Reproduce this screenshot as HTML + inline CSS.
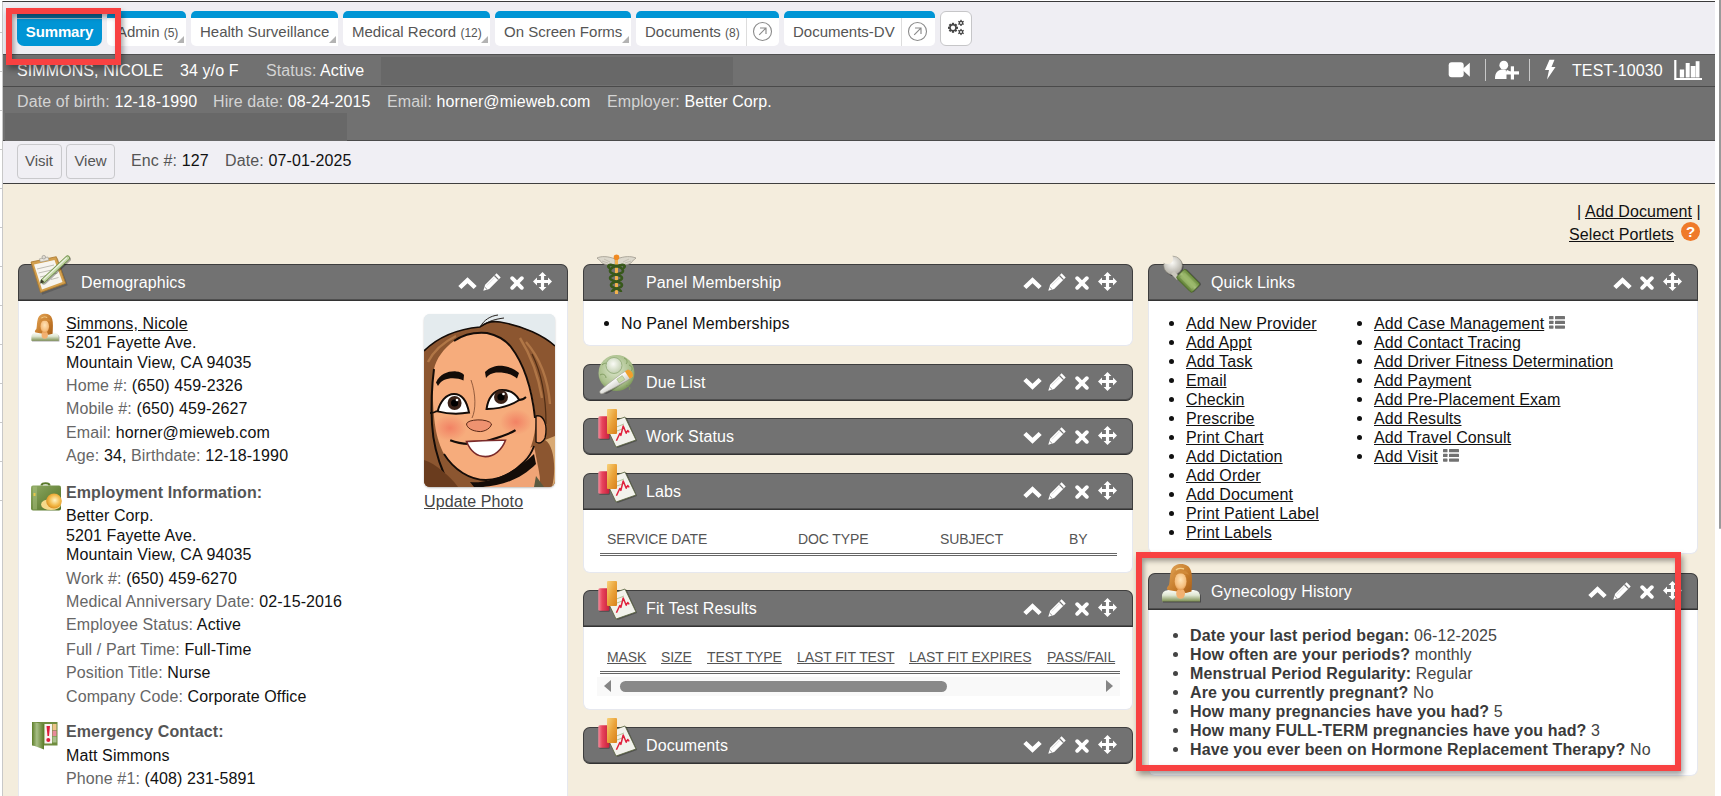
<!DOCTYPE html>
<html><head><meta charset="utf-8">
<style>
*{box-sizing:border-box;margin:0;padding:0}
html,body{width:1721px;height:796px;overflow:hidden;background:#fff;font-family:"Liberation Sans",sans-serif;position:relative}
.abs{position:absolute}
#frame{position:absolute;left:2px;top:1px;width:1713px;height:795px;border-left:1px solid #c8c8c8;border-top:1px solid #3a3a3a;background:#f4eddd}
#tabbar{position:absolute;left:3px;top:2px;width:1712px;height:52px;background:#efeef3}
.tab{position:absolute;top:11px;height:35px;background:#fff;border-top:7px solid #0095d5;border-radius:5px 5px 0 5px;font-size:15px;color:#555;white-space:nowrap;line-height:28px}
.tab small{font-size:12px}
.tab .tri{position:absolute;right:2px;bottom:3px;width:0;height:0;border-left:7px solid transparent;border-bottom:7px solid #b3b3b3}
#hdr1{position:absolute;left:3px;top:54px;width:1712px;height:33px;background:#717171;border-top:1px solid #505050;border-bottom:1px solid #4a4a4a}
#hdr2{position:absolute;left:3px;top:87px;width:1712px;height:54px;background:#717171;border-bottom:1px solid #4a4a4a}
.hl{color:#d4d4d4}.hv{color:#fff}
.htxt{position:absolute;font-size:16px;white-space:nowrap;line-height:18px;letter-spacing:.09px}
#enc{position:absolute;left:3px;top:141px;width:1712px;height:43px;background:#f0eff4;border-bottom:1px solid #3f3f3f}
.btn{position:absolute;top:3px;height:35px;border:1px solid #c9c9cc;border-radius:4px;background:#f0eff4;font-size:15px;color:#555;line-height:31px;text-align:center}
.etxt{position:absolute;top:11px;font-size:16px;white-space:nowrap;color:#555;line-height:18px;letter-spacing:.12px}
.etxt b{font-weight:normal;color:#111}
a{color:#111;text-decoration:underline}
.ph{position:absolute;height:37px;background:#727272;border:1px solid #3e3e3e;border-bottom-color:#333;box-shadow:inset 0 -1px 0 rgba(0,0,0,.3);border-radius:7px 7px 0 0}
.ph.col{border-radius:7px}
.ph .t{position:absolute;left:62px;top:9px;font-size:16px;color:#fff;line-height:18px;white-space:nowrap;letter-spacing:.12px}
.pb{position:absolute;background:#fff;border-radius:0 0 7px 7px;border:1px solid #e6e8ef;border-top:none}
.ico{position:absolute;top:0}
</style></head><body>
<div id="frame"></div>
<svg width="0" height="0" style="position:absolute">
<defs>
 <symbol id="i-up" viewBox="0 0 19 12"><path d="M0.3 9 L9.5 0.2 L18.7 9 L15.6 12 L9.5 6.2 L3.4 12 Z" fill="#fff"/></symbol>
 <symbol id="i-down" viewBox="0 0 19 12"><path d="M0.3 3 L9.5 11.8 L18.7 3 L15.6 0 L9.5 5.8 L3.4 0 Z" fill="#fff"/></symbol>
 <symbol id="i-pen" viewBox="0 0 18 18"><path d="M13.6 0.3 L17.7 4.4 L6.2 15.9 L0.3 17.7 L2.1 11.8 Z" fill="#fff"/><path d="M11.4 2.5 L15.5 6.6" stroke="#727272" stroke-width="1.2"/><path d="M3.8 12.4 L11.6 4.6" stroke="#c8c8c8" stroke-width="0.6"/><path d="M1.6 14 L4 16.4" stroke="#727272" stroke-width="0.8"/></symbol>
 <symbol id="i-x" viewBox="0 0 14 14"><path d="M2.2 2.2 L11.8 11.8 M11.8 2.2 L2.2 11.8" stroke="#fff" stroke-width="3.8" stroke-linecap="round"/></symbol>
 <symbol id="i-move" viewBox="0 0 19 19"><path d="M9.5 0 L13.4 4 L11.1 4 L11.1 7.9 L15 7.9 L15 5.6 L19 9.5 L15 13.4 L15 11.1 L11.1 11.1 L11.1 15 L13.4 15 L9.5 19 L5.6 15 L7.9 15 L7.9 11.1 L4 11.1 L4 13.4 L0 9.5 L4 5.6 L4 7.9 L7.9 7.9 L7.9 4 L5.6 4 Z" fill="#fff"/></symbol>
 <symbol id="i-chart" viewBox="0 0 40 40">
  <defs><linearGradient id="gred" x1="0" y1="0" x2="1" y2="0"><stop offset="0" stop-color="#f58a9a"/><stop offset=".35" stop-color="#e8455c"/><stop offset="1" stop-color="#c81e3c"/></linearGradient>
  <linearGradient id="gor" x1="0" y1="0" x2="1" y2="1"><stop offset="0" stop-color="#f8d27a"/><stop offset=".5" stop-color="#eaa33a"/><stop offset="1" stop-color="#d8801a"/></linearGradient></defs>
  <polygon points="9,17 29.5,9.5 40,33 20.5,40" fill="#000" opacity=".3"/>
  <polygon points="8,16 28,9 39,32 19,39" fill="#f2f2ec" stroke="#55603a" stroke-width=".8"/>
  <path d="M17 20 L27 16 M18.5 23.5 L28 20" stroke="#9ab07a" stroke-width=".7"/>
  <path d="M19.4 32.7 L22.8 25.5 L23.9 27.4 L26.2 18 L29.2 25.2 L30.7 22.5 L32.2 24.4" fill="none" stroke="#e0203c" stroke-width="1.5" stroke-linejoin="round"/>
  <rect x="2" y="10" width="11" height="22" rx="1.5" fill="#000" opacity=".25"/>
  <rect x="1.3" y="8.2" width="11" height="22.6" rx="1.5" fill="url(#gred)"/>
  <rect x="10" y="1" width="10" height="25" rx="1" fill="url(#gor)"/>
 </symbol>
 <symbol id="i-woman" viewBox="0 0 42 42">
  <defs><linearGradient id="gwb" x1="0" y1="0" x2="0" y2="1"><stop offset="0" stop-color="#fbfcf8"/><stop offset=".45" stop-color="#dfe6d2"/><stop offset="1" stop-color="#7d9052"/></linearGradient>
  <radialGradient id="gwf" cx=".5" cy=".4" r=".65"><stop offset="0" stop-color="#ffe4b8"/><stop offset=".7" stop-color="#f5bd7c"/><stop offset="1" stop-color="#dc8c40"/></radialGradient>
  <linearGradient id="gwh" x1="0" y1="0" x2="1" y2="1"><stop offset="0" stop-color="#e6a85a"/><stop offset=".6" stop-color="#c47a2a"/><stop offset="1" stop-color="#a85e18"/></linearGradient></defs>
  <path d="M3 40.5 L3 35 C3 31 6 29.5 11 29.5 L33 29.5 C38 29.5 41 31 41 35 L41 40.5 Z" fill="#000" opacity=".35"/>
  <path d="M2 39.5 L2 34 C2 30 5 28 10 28 L32 28 C37 28 40 30 40 34 L40 39.5 Z" fill="url(#gwb)"/>
  <path d="M8 28 C6 27 7 25 9 23 C10 19 9.5 14 11 9 C13 3.5 17 2 21 2 C26 2 29.5 4 31 9 C32.5 14 32 22 31.5 29.5 L26 31 L14 29 Z" fill="url(#gwh)"/>
  <ellipse cx="20.6" cy="31.5" rx="4.4" ry="5.2" fill="#f2b070"/>
  <ellipse cx="20.6" cy="19.5" rx="6" ry="8.8" fill="url(#gwf)"/>
  <path d="M13 13 C14 9 18 8 21 9 C24 8 28 9 29 13 C26 11 16 11 13 13 Z" fill="#d08a3a"/>
  <path d="M16 8 C18 6 22 6 24 7" stroke="#f4d08a" stroke-width="1.4" fill="none"/>
 </symbol>
</defs></svg>

<div id="tabbar"></div>

<!-- tabs -->
<div class="abs" style="left:17px;top:14px;width:85px;height:32px;background:#0095d5;border-top:4px solid #0a6a98;box-shadow:inset 0 1px 0 #9fb3bf;border-radius:0 0 7px 7px;color:#fff;font-weight:bold;font-size:15px;text-align:center;line-height:27px;letter-spacing:-.15px">Summary</div>
<div class="tab" style="left:107px;width:79px;padding-left:10px">Admin <small>(5)</small><span class="tri"></span></div>
<div class="tab" style="left:191px;width:147px;padding-left:9px">Health Surveillance<span class="tri"></span></div>
<div class="tab" style="left:343px;width:147px;padding-left:9px">Medical Record <small>(12)</small><span class="tri"></span></div>
<div class="tab" style="left:495px;width:136px;padding-left:9px">On Screen Forms<span class="tri"></span></div>
<div class="tab" style="left:636px;width:143px;padding-left:9px;border-radius:5px">Documents <small>(8)</small></div>
<div class="tab" style="left:784px;width:151px;padding-left:9px;border-radius:5px">Documents-DV</div>

<!-- header -->
<div id="hdr1"></div>
<div id="hdr2"></div>
<div class="abs" style="left:381px;top:57px;width:352px;height:28px;background:#686868"></div>
<div class="abs" style="left:5px;top:113px;width:342px;height:28px;background:#686868"></div>
<div class="htxt hv" style="left:17px;top:62px">SIMMONS, NICOLE</div>
<div class="htxt hv" style="left:180px;top:62px">34 y/o F</div>
<div class="htxt" style="left:266px;top:62px"><span class="hl">Status:</span> <span class="hv">Active</span></div>
<div class="htxt" style="left:17px;top:93px"><span class="hl">Date of birth:</span> <span class="hv">12-18-1990</span></div>
<div class="htxt" style="left:213px;top:93px"><span class="hl">Hire date:</span> <span class="hv">08-24-2015</span></div>
<div class="htxt" style="left:387px;top:93px"><span class="hl">Email:</span> <span class="hv">horner@mieweb.com</span></div>
<div class="htxt" style="left:607px;top:93px"><span class="hl">Employer:</span> <span class="hv">Better Corp.</span></div>
<div class="htxt hv" style="left:1572px;top:62px">TEST-10030</div>

<!-- encounter bar -->
<div id="enc">
 <div class="btn" style="left:14px;width:45px;text-indent:-1px">Visit</div>
 <div class="btn" style="left:63px;width:49px">View</div>
 <div class="etxt" style="left:128px">Enc #: <b>127</b></div>
 <div class="etxt" style="left:222px">Date: <b>07-01-2025</b></div>
</div>

<!-- add doc links -->
<div class="abs" style="left:1577px;top:203px;font-size:16px;color:#111;white-space:nowrap;line-height:18px;letter-spacing:.1px">| <a>Add Document</a> |</div>
<div class="abs" style="left:1569px;top:226px;font-size:16px;white-space:nowrap;line-height:18px;letter-spacing:.12px"><a>Select Portlets</a></div>
<div class="abs" style="left:1681px;top:222px;width:19px;height:19px;border-radius:50%;background:#ef7a2a;color:#fff;font-weight:bold;font-size:15px;text-align:center;line-height:19px">?</div>

<!-- Column 1: Demographics -->
<div class="ph" style="left:18px;top:264px;width:550px"><div class="t">Demographics</div></div><svg class="abs" style="left:29px;top:254px" width="42" height="42" viewBox="0 0 42 42">
<defs><linearGradient id="gpen" x1="0" y1="0" x2="1" y2="1"><stop offset="0" stop-color="#dfe8cf"/><stop offset="1" stop-color="#7d9a58"/></linearGradient></defs>
<polygon points="2.5,9 27.5,3 37.5,30 12,39.5" fill="#3b3b3b" opacity=".35" transform="translate(1.2,1.2)"/>
<polygon points="2,8 27.3,2.7 36.7,29.4 11.5,38.5" fill="#d3a04e" stroke="#a8762b" stroke-width=".8"/>
<polygon points="5,10.5 25.5,6 33.5,28 13,35.5" fill="#f7f5ef"/>
<path d="M8 15 L25 11 M9.5 19 L27 15 M11 23 L28.5 19 M13 27.5 L19 26 M22 25.5 L29.5 23.5" stroke="#b9b7ae" stroke-width=".9"/>
<path d="M10.5 4.8 L19 3 L19.8 6.2 L11.3 8 Z" fill="#e7e4dc" stroke="#9c9a92" stroke-width=".6"/><circle cx="14.8" cy="3.2" r="1.8" fill="#dedbd3" stroke="#8f8c84" stroke-width=".6"/>
<path d="M14 27 L38.5 4" stroke="#000" stroke-opacity=".3" stroke-width="5" stroke-linecap="round" transform="translate(1 1.2)"/><path d="M14 27 L38.5 4" stroke="#6f8f48" stroke-width="5" stroke-linecap="round"/><path d="M14 27 L38.5 4" stroke="#c3d6a6" stroke-width="3.4" stroke-linecap="round"/><path d="M15 25.2 L37.5 4" stroke="#eef4e4" stroke-width="1.1" stroke-linecap="round"/>
<path d="M11 29.5 L12.3 25.2 L15.6 28.2 Z" fill="#3a3a2a"/>
</svg><svg class="abs" style="left:533.0px;top:272px" width="19" height="19"><use href="#i-move"/></svg><svg class="abs" style="left:510.0px;top:276px" width="14" height="14"><use href="#i-x"/></svg><svg class="abs" style="left:483.0px;top:273px" width="18" height="18"><use href="#i-pen"/></svg><svg class="abs" style="left:457.5px;top:277px" width="19" height="12"><use href="#i-up"/></svg><div class="pb" style="left:18px;top:301px;width:550px;height:500px;border-radius:0"></div>
<!-- Column 2 -->
<div class="ph" style="left:583px;top:264px;width:550px"><div class="t">Panel Membership</div></div><div class="pb" style="left:583px;top:301px;width:550px;height:45px"></div><svg class="abs" style="left:596px;top:253px" width="42" height="43" viewBox="0 0 42 43">
<path d="M19 6 C12 3 5 3 1 5 C3 7 5 8 6 10 C9 12 14 12 19 12 Z" fill="#dcd8cc" stroke="#a09b8e" stroke-width=".8"/>
<path d="M21 6 C28 3 35 3 40 5 C38 7 36 8 35 10 C32 12 27 12 21 12 Z" fill="#dcd8cc" stroke="#a09b8e" stroke-width=".8"/>
<path d="M6 8 L12 10 M8 6 L14 9 M35 8 L29 10 M33 6 L27 9" stroke="#bdb8aa" stroke-width=".8"/>
<rect x="19" y="4" width="3" height="37" fill="#f2b24e"/>
<circle cx="20.5" cy="4.3" r="2.8" fill="#f08a22"/>
<path d="M14 15 C11 14 12 11 16 12 C22 13 27 15 27 18 C27 22 14 21 14 25 C14 29 26 28 26 32 C26 36 16 35 16 39 M27 15 C30 14 29 11 25 12 C19 13 14 15 14 18 C14 22 26 21 26 25 C26 29 15 28 15 32 C15 36 25 35 25 39" fill="none" stroke="#37581a" stroke-width="2.6"/>
</svg><svg class="abs" style="left:1098.0px;top:272px" width="19" height="19"><use href="#i-move"/></svg><svg class="abs" style="left:1075.0px;top:276px" width="14" height="14"><use href="#i-x"/></svg><svg class="abs" style="left:1048.0px;top:273px" width="18" height="18"><use href="#i-pen"/></svg><svg class="abs" style="left:1022.5px;top:277px" width="19" height="12"><use href="#i-up"/></svg><div class="ph col" style="left:583px;top:364px;width:550px"><div class="t">Due List</div></div><svg class="abs" style="left:596px;top:353px" width="42" height="42" viewBox="0 0 42 42">
<defs><radialGradient id="gdue" cx=".45" cy=".4" r=".65"><stop offset="0" stop-color="#dfe8d0"/><stop offset=".7" stop-color="#a9bf8a"/><stop offset="1" stop-color="#6f8c4c"/></radialGradient>
<radialGradient id="gdue2" cx=".45" cy=".4" r=".6"><stop offset="0" stop-color="#fafbf6"/><stop offset="1" stop-color="#c2cfb0"/></radialGradient>
<linearGradient id="gth" x1="0" y1="0" x2="0" y2="1"><stop offset="0" stop-color="#ffffff"/><stop offset="1" stop-color="#cfcfc8"/></linearGradient></defs>
<circle cx="20.5" cy="20" r="18" fill="url(#gdue)"/>
<path d="M6 12 C9 9 12 10 13 13 M4 22 C7 20 10 22 10 25 M28 5 C31 6 32 9 30 11 M33 12 C36 13 37 16 35 18 M30 33 C33 32 35 35 33 37 M12 33 C15 31 18 33 17 36" stroke="#7e9a5e" stroke-width=".9" fill="none"/>
<circle cx="18" cy="12.5" r="8" fill="url(#gdue2)" stroke="#8ea874" stroke-width=".8"/>
<g transform="rotate(-33 22 28)">
<rect x="3" y="24.5" width="34" height="7.5" rx="3.7" fill="#000" opacity=".25" transform="translate(.8 1)"/>
<path d="M0.5 28.2 C0.5 26.8 2 26 4 26 L12 25 L29 23.8 L35 23.8 C37 23.8 38 25.5 38 28.2 C38 31 37 32.6 35 32.6 L29 32.6 L12 31.4 L4 30.4 C2 30.4 0.5 29.6 .5 28.2 Z" fill="url(#gth)" stroke="#a8a69c" stroke-width=".6"/>
<path d="M33 23.8 L35.5 23.8 C37.5 23.8 38.5 25.5 38.5 28.2 C38.5 31 37.5 32.6 35.5 32.6 L33 32.6 Z" fill="#f0a02c"/>
<rect x="22" y="25.8" width="6.5" height="4.6" fill="#c9d9a8" stroke="#9ab07a" stroke-width=".5"/>
</g>
</svg><svg class="abs" style="left:1098.0px;top:372px" width="19" height="19"><use href="#i-move"/></svg><svg class="abs" style="left:1075.0px;top:376px" width="14" height="14"><use href="#i-x"/></svg><svg class="abs" style="left:1048.0px;top:373px" width="18" height="18"><use href="#i-pen"/></svg><svg class="abs" style="left:1022.5px;top:378px" width="19" height="12"><use href="#i-down"/></svg><div class="ph col" style="left:583px;top:418px;width:550px"><div class="t">Work Status</div></div><svg class="abs" style="left:597px;top:408px" width="40" height="40"><use href="#i-chart"/></svg><svg class="abs" style="left:1098.0px;top:426px" width="19" height="19"><use href="#i-move"/></svg><svg class="abs" style="left:1075.0px;top:430px" width="14" height="14"><use href="#i-x"/></svg><svg class="abs" style="left:1048.0px;top:427px" width="18" height="18"><use href="#i-pen"/></svg><svg class="abs" style="left:1022.5px;top:432px" width="19" height="12"><use href="#i-down"/></svg><div class="ph" style="left:583px;top:473px;width:550px"><div class="t">Labs</div></div><div class="pb" style="left:583px;top:510px;width:550px;height:63px"></div><svg class="abs" style="left:597px;top:463px" width="40" height="40"><use href="#i-chart"/></svg><svg class="abs" style="left:1098.0px;top:481px" width="19" height="19"><use href="#i-move"/></svg><svg class="abs" style="left:1075.0px;top:485px" width="14" height="14"><use href="#i-x"/></svg><svg class="abs" style="left:1048.0px;top:482px" width="18" height="18"><use href="#i-pen"/></svg><svg class="abs" style="left:1022.5px;top:486px" width="19" height="12"><use href="#i-up"/></svg><div class="ph" style="left:583px;top:590px;width:550px"><div class="t">Fit Test Results</div></div><div class="pb" style="left:583px;top:627px;width:550px;height:83px"></div><svg class="abs" style="left:597px;top:580px" width="40" height="40"><use href="#i-chart"/></svg><svg class="abs" style="left:1098.0px;top:598px" width="19" height="19"><use href="#i-move"/></svg><svg class="abs" style="left:1075.0px;top:602px" width="14" height="14"><use href="#i-x"/></svg><svg class="abs" style="left:1048.0px;top:599px" width="18" height="18"><use href="#i-pen"/></svg><svg class="abs" style="left:1022.5px;top:603px" width="19" height="12"><use href="#i-up"/></svg><div class="ph col" style="left:583px;top:727px;width:550px"><div class="t">Documents</div></div><svg class="abs" style="left:597px;top:717px" width="40" height="40"><use href="#i-chart"/></svg><svg class="abs" style="left:1098.0px;top:735px" width="19" height="19"><use href="#i-move"/></svg><svg class="abs" style="left:1075.0px;top:739px" width="14" height="14"><use href="#i-x"/></svg><svg class="abs" style="left:1048.0px;top:736px" width="18" height="18"><use href="#i-pen"/></svg><svg class="abs" style="left:1022.5px;top:741px" width="19" height="12"><use href="#i-down"/></svg>
<!-- Column 3 -->
<div class="ph" style="left:1148px;top:264px;width:550px"><div class="t">Quick Links</div></div><div class="pb" style="left:1148px;top:301px;width:550px;height:253px"></div><svg class="abs" style="left:1158px;top:253px" width="44" height="43" viewBox="0 0 44 43">
<defs><linearGradient id="gql" x1="0" y1="0" x2="1" y2="0"><stop offset="0" stop-color="#5a7a30"/><stop offset=".5" stop-color="#a6c07a"/><stop offset="1" stop-color="#688a3a"/></linearGradient>
<radialGradient id="gwr" cx=".45" cy=".35" r=".7"><stop offset="0" stop-color="#fbfaf6"/><stop offset="1" stop-color="#a9a69c"/></radialGradient>
<mask id="mwr"><rect width="44" height="43" fill="#fff"/><circle cx="9.5" cy="5.5" r="5.6" fill="#000"/></mask></defs>
<g opacity=".35" transform="translate(1.2 1.5)"><circle cx="15" cy="12.5" r="9.3" mask="url(#mwr)" fill="#000"/></g>
<circle cx="15" cy="12.5" r="9.3" fill="url(#gwr)" stroke="#8e8b80" stroke-width=".6" mask="url(#mwr)"/>
<path d="M16 18 L22 24 L19 27 L13 21 Z" fill="#c9c6bc"/>
<g transform="rotate(-45 30 28)"><rect x="24" y="17" width="12.5" height="22" rx="2" fill="#000" opacity=".3" transform="translate(1 1)"/><rect x="24" y="17" width="12.5" height="22" rx="2" fill="url(#gql)" stroke="#4c6a26" stroke-width=".8"/><rect x="27" y="20" width="6.5" height="16" fill="#9ab86a" opacity=".7"/></g>
</svg><svg class="abs" style="left:1663.0px;top:272px" width="19" height="19"><use href="#i-move"/></svg><svg class="abs" style="left:1640.0px;top:276px" width="14" height="14"><use href="#i-x"/></svg><svg class="abs" style="left:1613.0px;top:277px" width="19" height="12"><use href="#i-up"/></svg><div class="ph" style="left:1148px;top:573px;width:550px"><div class="t">Gynecology History</div></div><div class="pb" style="left:1148px;top:610px;width:550px;height:166px"></div><svg class="abs" style="left:1160px;top:562px" width="42" height="42" viewBox="0 0 42 42"><use href="#i-woman"/></svg><svg class="abs" style="left:1663.0px;top:581px" width="19" height="19"><use href="#i-move"/></svg><svg class="abs" style="left:1640.0px;top:585px" width="14" height="14"><use href="#i-x"/></svg><svg class="abs" style="left:1613.0px;top:582px" width="18" height="18"><use href="#i-pen"/></svg><svg class="abs" style="left:1587.5px;top:586px" width="19" height="12"><use href="#i-up"/></svg>

<style>
.tx{position:absolute;font-size:16px;line-height:19px;white-space:nowrap;color:#111;letter-spacing:.11px}
.lb{color:#666}
.bu{position:absolute;width:5px;height:5px;border-radius:50%;background:#111}
.th{position:absolute;font-size:14px;line-height:16px;color:#555;white-space:nowrap;letter-spacing:-.1px}
.th.u{text-decoration:underline}
.gy{position:absolute;font-size:16px;line-height:19px;white-space:nowrap;color:#444;letter-spacing:.12px}
.gy b{color:#3a3a3a}
</style>
<!-- Demographics content -->
<svg class="abs" style="left:24px;top:310px" width="42" height="42" viewBox="0 0 42 42"><g transform="translate(5.9 2.4) scale(0.72)"><use href="#i-woman" width="42" height="42"/></g></svg>
<div class="tx" style="left:66px;top:314px"><a>Simmons, Nicole</a></div>
<div class="tx" style="left:66px;top:333px">5201 Fayette Ave.</div>
<div class="tx" style="left:66px;top:353px">Mountain View, CA 94035</div>
<div class="tx" style="left:66px;top:376px"><span class="lb">Home #:</span> (650) 459-2326</div>
<div class="tx" style="left:66px;top:399px"><span class="lb">Mobile #:</span> (650) 459-2627</div>
<div class="tx" style="left:66px;top:423px"><span class="lb">Email:</span> horner@mieweb.com</div>
<div class="tx" style="left:66px;top:446px"><span class="lb">Age:</span> 34, <span class="lb">Birthdate:</span> 12-18-1990</div>

<div class="tx" style="left:66px;top:483px;font-weight:bold;color:#555">Employment Information:</div>
<div class="tx" style="left:66px;top:506px">Better Corp.</div>
<div class="tx" style="left:66px;top:526px">5201 Fayette Ave.</div>
<div class="tx" style="left:66px;top:545px">Mountain View, CA 94035</div>
<div class="tx" style="left:66px;top:569px"><span class="lb">Work #:</span> (650) 459-6270</div>
<div class="tx" style="left:66px;top:592px"><span class="lb">Medical Anniversary Date:</span> 02-15-2016</div>
<div class="tx" style="left:66px;top:615px"><span class="lb">Employee Status:</span> Active</div>
<div class="tx" style="left:66px;top:640px"><span class="lb">Full / Part Time:</span> Full-Time</div>
<div class="tx" style="left:66px;top:663px"><span class="lb">Position Title:</span> Nurse</div>
<div class="tx" style="left:66px;top:687px"><span class="lb">Company Code:</span> Corporate Office</div>
<div class="tx" style="left:66px;top:722px;font-weight:bold;color:#555">Emergency Contact:</div>
<div class="tx" style="left:66px;top:746px">Matt Simmons</div>
<div class="tx" style="left:66px;top:769px"><span class="lb">Phone #1:</span> (408) 231-5891</div>

<!-- photo placeholder -->
<div id="photo" class="abs" style="left:424px;top:314px;width:131px;height:173px;border-radius:6px;overflow:hidden;background:#e3eaed;box-shadow:0 1px 2px rgba(0,0,0,.25)"><svg width="131" height="173" viewBox="0 0 131 173">
<defs><radialGradient id="gcheek" cx=".5" cy=".5" r=".5"><stop offset="0" stop-color="#f0705a" stop-opacity=".7"/><stop offset="1" stop-color="#f0705a" stop-opacity="0"/></radialGradient></defs>
<rect width="131" height="173" fill="#e4ebee"/>
<!-- back hair -->
<path d="M0 37 C15 22 35 15 56 13 C62 8 70 7 76 8 C100 12 120 22 131 32 L131 173 L0 173 Z" fill="#8c5630"/>
<!-- neck skin -->
<path d="M60 173 L70 150 L110 132 L118 173 Z" fill="#f0a476"/>
<!-- face -->
<path d="M9 60 C10 40 22 22 46 19 C64 17 84 22 96 40 C108 58 113 80 112 105 C111 125 106 140 96 150 C86 160 74 166 62 166 C46 166 30 156 20 140 C11 124 8 100 9 60 Z" fill="#f6ac7c"/>
<ellipse cx="26" cy="114" rx="17" ry="13" fill="url(#gcheek)"/>
<ellipse cx="92" cy="108" rx="16" ry="13" fill="url(#gcheek)"/>
<!-- hair over face -->
<path d="M0 37 C15 22 35 15 56 13 C62 8 70 7 76 8 C100 12 120 22 131 32 L131 173 L116 173 C116 150 114 128 112 108 C110 80 102 52 87 33 C80 24 72 21 63 19 C52 18 40 20 30 27 C20 34 12 45 10 55 C8 70 7 90 8 110 C9 130 14 150 22 173 L0 173 Z" fill="#8c5630"/>
<path d="M10 55 C8 70 7 90 8 110 C9 128 14 146 20 160" stroke="#140c08" stroke-width="2" fill="none"/>
<path d="M30 27 C40 20 52 18 63 19 C72 21 80 24 87 33 C100 50 108 76 111 104" stroke="#140c08" stroke-width="2" fill="none"/>
<path d="M0 37 C15 22 35 15 56 13 C62 8 70 7 76 8 C100 12 120 22 131 32" stroke="#140c08" stroke-width="1.6" fill="none"/>
<path d="M56 13 C60 6 66 2 74 1 M58 12 C64 7 72 5 80 4" stroke="#140c08" stroke-width=".9" fill="none"/>
<path d="M102 28 C116 44 124 66 126 90 M96 24 C106 40 114 60 118 84 M4 48 C10 36 20 28 32 22" stroke="#b07646" stroke-width="2.4" fill="none"/>
<path d="M108 40 C118 60 122 86 122 110" stroke="#4e2c14" stroke-width="1.2" fill="none"/>
<!-- ear + light hair -->
<path d="M112 102 C120 100 124 112 121 124 C119 129 115 130 112 128 Z" fill="#ec9c6c" stroke="#140c08" stroke-width="1.3"/>
<path d="M121 126 C131 132 132 158 128 173 L131 173 L131 122 Z" fill="#d9aa74"/>
<!-- jaw line & neck shadow -->
<path d="M20 140 C30 156 46 166 62 166 C76 166 90 158 100 148 C104 144 108 138 110 132" stroke="#140c08" stroke-width="1.8" fill="none"/>
<path d="M46 168 C66 170 92 158 110 140 L112 150 C96 166 74 174 50 173 Z" fill="#140c08"/>
<path d="M112 162 L120 173 L110 173 Z" fill="#5a5a40"/>
<path d="M0 146 C12 150 26 162 34 173 L0 173 Z" fill="#6a3c1e"/>
<!-- eyebrows -->
<path d="M12 68.4 C16 60 24 57 32 57.4 C36 57.6 39 59 40 61 L39.5 66.5 C34 64 26 63.5 20 66 C17 67.5 15 70 14 72 Z" fill="#140c08"/>
<path d="M61 58 C66 53 72 51.5 78 51.8 C86 52.5 92 56 95 59 L93 64.5 C88 60 80 58 72 58.5 C68 59 64 61 62 64 Z" fill="#140c08"/>
<!-- eyes -->
<path d="M13.6 97.4 C16 88 22 80 30 80 C38 80 43 88 45 98.6 C36 100 24 100 13.6 97.4 Z" fill="#fff" stroke="#140c08" stroke-width="2"/>
<circle cx="30.6" cy="89" r="7" fill="#3a2218"/><circle cx="30.6" cy="89" r="3.6" fill="#000"/><circle cx="33" cy="86" r="1.3" fill="#fff"/>
<path d="M62.6 94.9 C64 84 70 76 78 76 C86 76 92 80 95.3 86 C86 92 74 95 62.6 94.9 Z" fill="#fff" stroke="#140c08" stroke-width="2"/>
<circle cx="77" cy="83" r="7" fill="#3a2218"/><circle cx="77" cy="83" r="3.6" fill="#000"/><circle cx="79.5" cy="80" r="1.3" fill="#fff"/>
<path d="M13 97 C10 99 8 99 6 99 M95 86 C98 86 100 85 102 83" stroke="#140c08" stroke-width="1.8" fill="none"/>
<!-- nose -->
<path d="M47 66 C52 80 52 96 48 104" stroke="#6a3a22" stroke-width=".7" fill="none"/>
<path d="M42.5 110 C43 105 64 104 67.6 110 C66 116 58 118 55 117.5 C48 117 43 114 42.5 110 Z" fill="#ef9270" stroke="#5a2a18" stroke-width="1"/>
<!-- mouth -->
<path d="M26.2 126.3 C40 132 56 130 66 126 C76 123 86 120 91.5 116.2" stroke="#140c08" stroke-width="2.2" fill="none"/>
<path d="M42.5 127.5 C54 127 70 126 81.5 126.3 C78 136 70 142.6 61.4 142.6 C52 142.6 46 136 42.5 127.5 Z" fill="#fff" stroke="#7a2a2a" stroke-width="1.6"/>
</svg></div>
<div class="tx" style="left:424px;top:492px;color:#444"><a style="color:#444">Update Photo</a></div>

<!-- Panel membership -->
<div class="bu" style="left:604px;top:321px"></div>
<div class="tx" style="left:621px;top:314px">No Panel Memberships</div>

<!-- Labs table -->
<div class="th" style="left:607px;top:531px">SERVICE DATE</div>
<div class="th" style="left:798px;top:531px">DOC TYPE</div>
<div class="th" style="left:940px;top:531px">SUBJECT</div>
<div class="th" style="left:1069px;top:531px">BY</div>
<div class="abs" style="left:600px;top:553px;width:517px;height:3px;border-top:1px solid #666;border-bottom:1px solid #666"></div>

<!-- Fit test table -->
<div class="th u" style="left:607px;top:649px">MASK</div>
<div class="th u" style="left:661px;top:649px">SIZE</div>
<div class="th u" style="left:707px;top:649px">TEST TYPE</div>
<div class="th u" style="left:797px;top:649px">LAST FIT TEST</div>
<div class="th u" style="left:909px;top:649px">LAST FIT EXPIRES</div>
<div class="th u" style="left:1047px;top:649px">PASS/FAIL</div>
<div class="abs" style="left:600px;top:671px;width:520px;height:3px;border-top:1px solid #666;border-bottom:1px solid #666"></div>
<div class="abs" style="left:597px;top:677px;width:523px;height:19px;background:#f9f9f9"></div>
<div class="abs" style="left:604px;top:680px;width:0;height:0;border-top:6.5px solid transparent;border-bottom:6.5px solid transparent;border-right:7px solid #858585"></div>
<div class="abs" style="left:1106px;top:680px;width:0;height:0;border-top:6.5px solid transparent;border-bottom:6.5px solid transparent;border-left:7px solid #858585"></div>
<div class="abs" style="left:620px;top:681px;width:327px;height:11px;border-radius:6px;background:#898989"></div>

<!-- Quick links -->
<div class="abs" style="left:1172px;top:314px"></div>
<div class="bu" style="left:1169px;top:321px"></div><div class="tx" style="left:1186px;top:314px"><a>Add New Provider</a></div>
<div class="bu" style="left:1169px;top:340px"></div><div class="tx" style="left:1186px;top:333px"><a>Add Appt</a></div>
<div class="bu" style="left:1169px;top:359px"></div><div class="tx" style="left:1186px;top:352px"><a>Add Task</a></div>
<div class="bu" style="left:1169px;top:378px"></div><div class="tx" style="left:1186px;top:371px"><a>Email</a></div>
<div class="bu" style="left:1169px;top:397px"></div><div class="tx" style="left:1186px;top:390px"><a>Checkin</a></div>
<div class="bu" style="left:1169px;top:416px"></div><div class="tx" style="left:1186px;top:409px"><a>Prescribe</a></div>
<div class="bu" style="left:1169px;top:435px"></div><div class="tx" style="left:1186px;top:428px"><a>Print Chart</a></div>
<div class="bu" style="left:1169px;top:454px"></div><div class="tx" style="left:1186px;top:447px"><a>Add Dictation</a></div>
<div class="bu" style="left:1169px;top:473px"></div><div class="tx" style="left:1186px;top:466px"><a>Add Order</a></div>
<div class="bu" style="left:1169px;top:492px"></div><div class="tx" style="left:1186px;top:485px"><a>Add Document</a></div>
<div class="bu" style="left:1169px;top:511px"></div><div class="tx" style="left:1186px;top:504px"><a>Print Patient Label</a></div>
<div class="bu" style="left:1169px;top:530px"></div><div class="tx" style="left:1186px;top:523px"><a>Print Labels</a></div>
<div class="bu" style="left:1357px;top:321px"></div><div class="tx" style="left:1374px;top:314px"><a>Add Case Management</a><svg width="16" height="13" viewBox="0 0 16 13" style="vertical-align:0px;margin-left:5px"><g fill="#727272"><rect x="0" y="0" width="4.5" height="3.3" rx=".6"/><rect x="6" y="0" width="10" height="3.3" rx=".6"/><rect x="0" y="4.7" width="4.5" height="3.3" rx=".6"/><rect x="6" y="4.7" width="10" height="3.3" rx=".6"/><rect x="0" y="9.4" width="4.5" height="3.3" rx=".6"/><rect x="6" y="9.4" width="10" height="3.3" rx=".6"/></g></svg></div>
<div class="bu" style="left:1357px;top:340px"></div><div class="tx" style="left:1374px;top:333px"><a>Add Contact Tracing</a></div>
<div class="bu" style="left:1357px;top:359px"></div><div class="tx" style="left:1374px;top:352px"><a>Add Driver Fitness Determination</a></div>
<div class="bu" style="left:1357px;top:378px"></div><div class="tx" style="left:1374px;top:371px"><a>Add Payment</a></div>
<div class="bu" style="left:1357px;top:397px"></div><div class="tx" style="left:1374px;top:390px"><a>Add Pre-Placement Exam</a></div>
<div class="bu" style="left:1357px;top:416px"></div><div class="tx" style="left:1374px;top:409px"><a>Add Results</a></div>
<div class="bu" style="left:1357px;top:435px"></div><div class="tx" style="left:1374px;top:428px"><a>Add Travel Consult</a></div>
<div class="bu" style="left:1357px;top:454px"></div><div class="tx" style="left:1374px;top:447px"><a>Add Visit</a><svg width="16" height="13" viewBox="0 0 16 13" style="vertical-align:0px;margin-left:5px"><g fill="#727272"><rect x="0" y="0" width="4.5" height="3.3" rx=".6"/><rect x="6" y="0" width="10" height="3.3" rx=".6"/><rect x="0" y="4.7" width="4.5" height="3.3" rx=".6"/><rect x="6" y="4.7" width="10" height="3.3" rx=".6"/><rect x="0" y="9.4" width="4.5" height="3.3" rx=".6"/><rect x="6" y="9.4" width="10" height="3.3" rx=".6"/></g></svg></div>
<div class="bu" style="left:1173px;top:633px;background:#444"></div><div class="gy" style="left:1190px;top:626px"><b>Date your last period began:</b> 06-12-2025</div>
<div class="bu" style="left:1173px;top:652px;background:#444"></div><div class="gy" style="left:1190px;top:645px"><b>How often are your periods?</b> monthly</div>
<div class="bu" style="left:1173px;top:671px;background:#444"></div><div class="gy" style="left:1190px;top:664px"><b>Menstrual Period Regularity:</b> Regular</div>
<div class="bu" style="left:1173px;top:690px;background:#444"></div><div class="gy" style="left:1190px;top:683px"><b>Are you currently pregnant?</b> No</div>
<div class="bu" style="left:1173px;top:709px;background:#444"></div><div class="gy" style="left:1190px;top:702px"><b>How many pregnancies have you had?</b> 5</div>
<div class="bu" style="left:1173px;top:728px;background:#444"></div><div class="gy" style="left:1190px;top:721px"><b>How many FULL-TERM pregnancies have you had?</b> 3</div>
<div class="bu" style="left:1173px;top:747px;background:#444"></div><div class="gy" style="left:1190px;top:740px"><b>Have you ever been on Hormone Replacement Therapy?</b> No</div>


<!-- tab extras -->
<div class="abs" style="left:746px;top:18px;width:1px;height:28px;background:#ddd"></div>
<svg class="abs" style="left:752px;top:21px" width="21" height="21" viewBox="0 0 21 21"><circle cx="10.5" cy="10.5" r="9" fill="none" stroke="#8a8a8a" stroke-width="1.1"/><path d="M7.2 13.8 L13.6 7.4 M8 7 L14 7 L14 13" fill="none" stroke="#8a8a8a" stroke-width="1.15"/></svg>
<div class="abs" style="left:901px;top:18px;width:1px;height:28px;background:#ddd"></div>
<svg class="abs" style="left:907px;top:21px" width="21" height="21" viewBox="0 0 21 21"><circle cx="10.5" cy="10.5" r="9" fill="none" stroke="#8a8a8a" stroke-width="1.1"/><path d="M7.2 13.8 L13.6 7.4 M8 7 L14 7 L14 13" fill="none" stroke="#8a8a8a" stroke-width="1.15"/></svg>
<div class="abs" style="left:940px;top:11px;width:32px;height:35px;border:1.5px solid #c6c6c8;border-radius:6px;background:#fff"></div>
<svg class="abs" style="left:946px;top:19px" width="20" height="18" viewBox="0 0 20 18">
 <g fill="#454545">
  <circle cx="7" cy="8.8" r="3.7"/>
  <g transform="translate(7 8.8)"><rect x="-1.1" y="-5" width="2.2" height="10"/><rect x="-1.1" y="-5" width="2.2" height="10" transform="rotate(45)"/><rect x="-1.1" y="-5" width="2.2" height="10" transform="rotate(90)"/><rect x="-1.1" y="-5" width="2.2" height="10" transform="rotate(135)"/></g>
  <circle cx="15" cy="3.9" r="2.1"/>
  <g transform="translate(15 3.9)"><rect x="-.7" y="-3.1" width="1.4" height="6.2"/><rect x="-.7" y="-3.1" width="1.4" height="6.2" transform="rotate(60)"/><rect x="-.7" y="-3.1" width="1.4" height="6.2" transform="rotate(120)"/></g>
  <circle cx="15" cy="13" r="2.1"/>
  <g transform="translate(15 13)"><rect x="-.7" y="-3.1" width="1.4" height="6.2"/><rect x="-.7" y="-3.1" width="1.4" height="6.2" transform="rotate(60)"/><rect x="-.7" y="-3.1" width="1.4" height="6.2" transform="rotate(120)"/></g>
 </g>
 <circle cx="7" cy="8.8" r="2.2" fill="#fff"/><circle cx="15" cy="3.9" r="1" fill="#fff"/><circle cx="15" cy="13" r="1" fill="#fff"/>
</svg>

<!-- header icons -->
<svg class="abs" style="left:1448px;top:61px" width="23" height="17" viewBox="0 0 23 17"><rect x="0.7" y="1.2" width="15" height="15" rx="3" fill="#fff"/><path d="M14 8.5 L21.8 1.8 L21.8 15.8 Z" fill="#fff"/></svg>
<div class="abs" style="left:1485px;top:59px;width:1px;height:22px;background:#c8c8c8"></div>
<svg class="abs" style="left:1494px;top:60px" width="26" height="20" viewBox="0 0 26 20"><circle cx="9.8" cy="5.2" r="4.4" fill="#fff"/><path d="M1 19 C1 12 4 9.5 9.5 9.5 C13 9.5 15.5 10.5 16.5 12.5 L12.5 12.5 L12.5 19 Z" fill="#fff"/><rect x="11.8" y="11.3" width="13.2" height="3.2" fill="#fff"/><rect x="16.8" y="6.3" width="3.2" height="13.2" fill="#fff"/><rect x="11.8" y="10.2" width="1" height="1" fill="#727272"/></svg>
<div class="abs" style="left:1529px;top:59px;width:1px;height:22px;background:#c8c8c8"></div>
<svg class="abs" style="left:1543px;top:59px" width="14" height="21" viewBox="0 0 14 21"><path d="M6.5 0.8 L11.5 0.8 L8.5 8 L12.5 8 L4 20.5 L6 11 L2 11 Z" fill="#fff"/></svg>
<svg class="abs" style="left:1674px;top:59px" width="29" height="22" viewBox="0 0 29 22"><path d="M1.3 1 L1.3 20 L28 20" fill="none" stroke="#fff" stroke-width="2.2"/><rect x="5.8" y="10.5" width="4.4" height="8" fill="#fff"/><rect x="11.7" y="4" width="4" height="14.5" fill="#fff"/><rect x="16.7" y="7" width="4.8" height="11.5" fill="#fff"/><rect x="21.7" y="2.2" width="3.8" height="16.3" fill="#fff"/></svg>

<!-- employment & emergency icons -->
<svg class="abs" style="left:29px;top:481px" width="34" height="32" viewBox="0 0 34 32">
 <defs><linearGradient id="gbc" x1="0" y1="0" x2="1" y2="1"><stop offset="0" stop-color="#8faa64"/><stop offset="1" stop-color="#4f6e22"/></linearGradient>
 <radialGradient id="ghat" cx=".55" cy=".45" r=".6"><stop offset="0" stop-color="#fff3c0"/><stop offset=".6" stop-color="#f2b847"/><stop offset="1" stop-color="#d88a1c"/></radialGradient></defs>
 <path d="M12.5 4.5 C12.5 1.5 20.5 1.5 20.5 4.5" fill="none" stroke="#5b7a2c" stroke-width="2.2"/>
 <rect x="2" y="4.5" width="30" height="25" rx="2" fill="url(#gbc)"/>
 <rect x="4" y="5.5" width="4" height="23" fill="#a9c07e" opacity=".5"/>
 <rect x="4.5" y="12" width="2" height="3" fill="#e8c84a"/>
 <ellipse cx="22" cy="23.5" rx="10" ry="5.5" fill="#f7d98a"/>
 <ellipse cx="25" cy="20" rx="7.8" ry="7.5" fill="url(#ghat)"/>
</svg>
<svg class="abs" style="left:31px;top:721px" width="28" height="30" viewBox="0 0 28 30">
 <defs><linearGradient id="gfold" x1="0" y1="0" x2="1" y2="0"><stop offset="0" stop-color="#5e7f2a"/><stop offset=".4" stop-color="#a8bf86"/><stop offset="1" stop-color="#5a7a26"/></linearGradient></defs>
 <rect x="1" y="1" width="25.5" height="23.5" fill="#6f8c3e"/>
 <rect x="13.5" y="3" width="7.5" height="19.5" fill="#f7f4f0"/>
 <rect x="21.5" y="3" width="4" height="6" fill="#eec48a"/><rect x="21.5" y="9.5" width="4" height="5.5" fill="#e88a9a"/><rect x="21.5" y="15.5" width="4" height="6" fill="#a8bf8a"/>
 <path d="M15.5 5 L19 5 L18 15 L16.5 15 Z" fill="#dd1c3a"/><circle cx="17.3" cy="19" r="2" fill="#dd1c3a"/>
 <path d="M1 1 L13 3 L13 28.5 L1 24 Z" fill="url(#gfold)"/>
</svg>

<!-- red highlight boxes -->
<div class="abs" style="left:6px;top:8px;width:115px;height:57px;border:6px solid #f84141;box-shadow:2px 4px 6px rgba(0,0,0,.38), inset 2px 3px 5px rgba(0,0,0,.35)"></div>
<div class="abs" style="left:1136px;top:552px;width:545px;height:219px;border:6px solid #f84141;box-shadow:2px 4px 6px rgba(0,0,0,.38), inset 2px 3px 5px rgba(0,0,0,.35)"></div>

<!-- left ticks --><div class="abs" style="left:0;top:32px;width:2px;height:1px;background:#c8c8c8"></div><div class="abs" style="left:0;top:71px;width:2px;height:1px;background:#c8c8c8"></div><div class="abs" style="left:0;top:110px;width:2px;height:1px;background:#c8c8c8"></div><div class="abs" style="left:0;top:149px;width:2px;height:1px;background:#c8c8c8"></div><div class="abs" style="left:0;top:188px;width:2px;height:1px;background:#c8c8c8"></div><div class="abs" style="left:0;top:227px;width:2px;height:1px;background:#c8c8c8"></div><div class="abs" style="left:0;top:266px;width:2px;height:1px;background:#c8c8c8"></div><div class="abs" style="left:0;top:305px;width:2px;height:1px;background:#c8c8c8"></div><div class="abs" style="left:0;top:344px;width:2px;height:1px;background:#c8c8c8"></div><div class="abs" style="left:0;top:383px;width:2px;height:1px;background:#c8c8c8"></div><div class="abs" style="left:0;top:422px;width:2px;height:1px;background:#c8c8c8"></div><div class="abs" style="left:0;top:461px;width:2px;height:1px;background:#c8c8c8"></div><div class="abs" style="left:0;top:500px;width:2px;height:1px;background:#c8c8c8"></div>
<!-- right scrollbar -->
<div class="abs" style="left:1719px;top:0;width:2px;height:529px;background:#9a9a9a;border-radius:0 0 2px 2px"></div>
</body></html>
